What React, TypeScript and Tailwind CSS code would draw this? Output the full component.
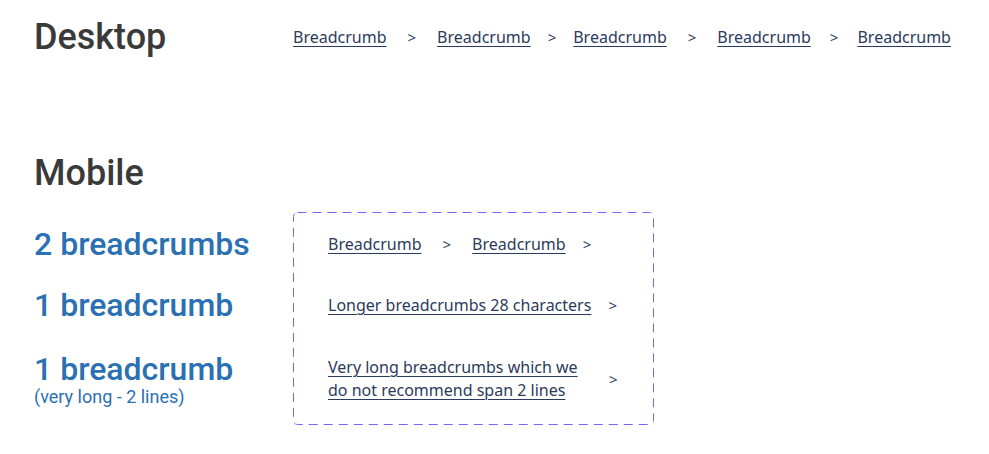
import React from 'react';

const Crumb = ({ children }: { children: React.ReactNode }) => (
  <a href="#" className="text-[#2b3b5c] underline underline-offset-[3px] decoration-1">
    {children}
  </a>
);

const Sep = ({ className = '' }: { className?: string }) => (
  <span className={`text-[#2b3b5c] text-[15px] ${className}`}>&gt;</span>
);

const App = () => {
  const desktop = ['Breadcrumb', 'Breadcrumb', 'Breadcrumb', 'Breadcrumb', 'Breadcrumb'];
  // spacing in the mock is not even, keep it as drawn
  const sepGap = ['mx-[21px]', 'mx-[17px]', 'mx-[21px]', 'mx-[19px]'];

  return (
    <div className="w-[989px] h-[454px] bg-white font-['Roboto',sans-serif] px-[34px] pt-[14px]">
      {/* Desktop */}
      <div className="flex items-center h-[46px]">
        <h1 className="w-[259px] shrink-0 text-[36px] font-medium text-[#3a3a3a] leading-none">Desktop</h1>
        <nav className="flex items-center shrink-0 whitespace-nowrap font-['Noto_Sans',sans-serif] text-[16px]">
          {desktop.map((c, i) => (
            <React.Fragment key={i}>
              <Crumb>{c}</Crumb>
              {i < desktop.length - 1 && <Sep className={sepGap[i]} />}
            </React.Fragment>
          ))}
        </nav>
      </div>

      {/* Mobile */}
      <h2 className="mt-[95px] text-[36px] font-medium text-[#3a3a3a] leading-none">Mobile</h2>

      <div className="flex mt-[21px]">
        <div className="w-[259px] flex flex-col text-[#2a70b2]">
          <div className="h-[62px] flex items-center pt-[2px] text-[32px] font-medium">2 breadcrumbs</div>
          <div className="h-[62px] flex items-center text-[32px] font-medium">1 breadcrumb</div>
          <div className="pt-[15px] text-[32px] font-medium leading-[36px]">1 breadcrumb</div>
          <div className="text-[18px] leading-[20px]">(very long - 2 lines)</div>
        </div>

        <div className="relative w-[361px] h-[213px] px-[35px] pt-[21px] font-['Noto_Sans',sans-serif] text-[16px]">
          <svg className="absolute inset-0" width="361" height="213">
            <rect
              x="0.5"
              y="0.5"
              width="360"
              height="212"
              rx="4"
              fill="none"
              stroke="#7b61ff"
              strokeWidth="1"
              strokeDasharray="9 6"
            />
          </svg>
          <div className="h-[22px] flex items-center">
            <Crumb>Breadcrumb</Crumb>
            <Sep className="mx-[21px]" />
            <Crumb>Breadcrumb</Crumb>
            <Sep className="ml-[17px]" />
          </div>
          <div className="mt-[39px] h-[22px] flex items-center">
            <Crumb>Longer breadcrumbs 28 characters</Crumb>
            <Sep className="ml-[17px]" />
          </div>
          <div className="mt-[40px] flex items-center">
            <div className="w-[260px] leading-[23px]">
              <Crumb>Very long breadcrumbs which we do not recommend span 2 lines</Crumb>
            </div>
            <Sep className="ml-[21px]" />
          </div>
        </div>
      </div>
    </div>
  );
};

export default App;
